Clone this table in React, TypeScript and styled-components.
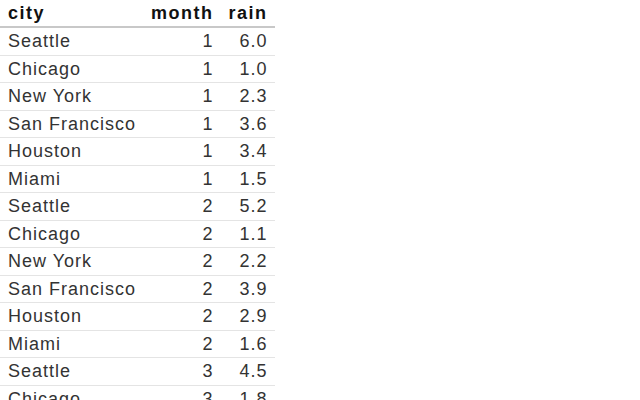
import React from 'react'
import styled, { createGlobalStyle } from 'styled-components'

const rows: [string, number, number][] = [
  ['Seattle', 1, 6.0],
  ['Chicago', 1, 1.0],
  ['New York', 1, 2.3],
  ['San Francisco', 1, 3.6],
  ['Houston', 1, 3.4],
  ['Miami', 1, 1.5],
  ['Seattle', 2, 5.2],
  ['Chicago', 2, 1.1],
  ['New York', 2, 2.2],
  ['San Francisco', 2, 3.9],
  ['Houston', 2, 2.9],
  ['Miami', 2, 1.6],
  ['Seattle', 3, 4.5],
  ['Chicago', 3, 1.8]
]

const GlobalStyle = createGlobalStyle`
  body {
    margin: 0;
    background: #fff;
    font-family: "Liberation Sans", Arial, sans-serif;
  }
`

const Table = styled.table`
  border-collapse: collapse;
  font-size: 18px;
  letter-spacing: 1px;
  color: #333;
`

const HeadCell = styled.th<{ $align?: 'left' | 'right' }>`
  text-align: ${(p) => p.$align ?? 'left'};
  font-weight: bold;
  letter-spacing: 1.5px;
  color: #111;
  padding: 3px 7px 2px 8px;
  line-height: 21px;
  border-bottom: 2px solid #c8c8c8;
`

const Row = styled.tr`
  border-bottom: 1px solid #e4e4e4;
`

const Cell = styled.td<{ $align?: 'left' | 'right' }>`
  text-align: ${(p) => p.$align ?? 'left'};
  padding: 3px 7px 3px 8px;
  line-height: 20.5px;
  white-space: nowrap;
`

export default function App() {
  return (
    <>
      <GlobalStyle />
      <Table>
        <thead>
          <tr>
            <HeadCell>city</HeadCell>
            <HeadCell $align="right">month</HeadCell>
            <HeadCell $align="right">rain</HeadCell>
          </tr>
        </thead>
        <tbody>
          {rows.map(([city, month, rain], i) => (
            <Row key={i}>
              <Cell>{city}</Cell>
              <Cell $align="right">{month}</Cell>
              <Cell $align="right">{rain.toFixed(1)}</Cell>
            </Row>
          ))}
        </tbody>
      </Table>
    </>
  )
}
